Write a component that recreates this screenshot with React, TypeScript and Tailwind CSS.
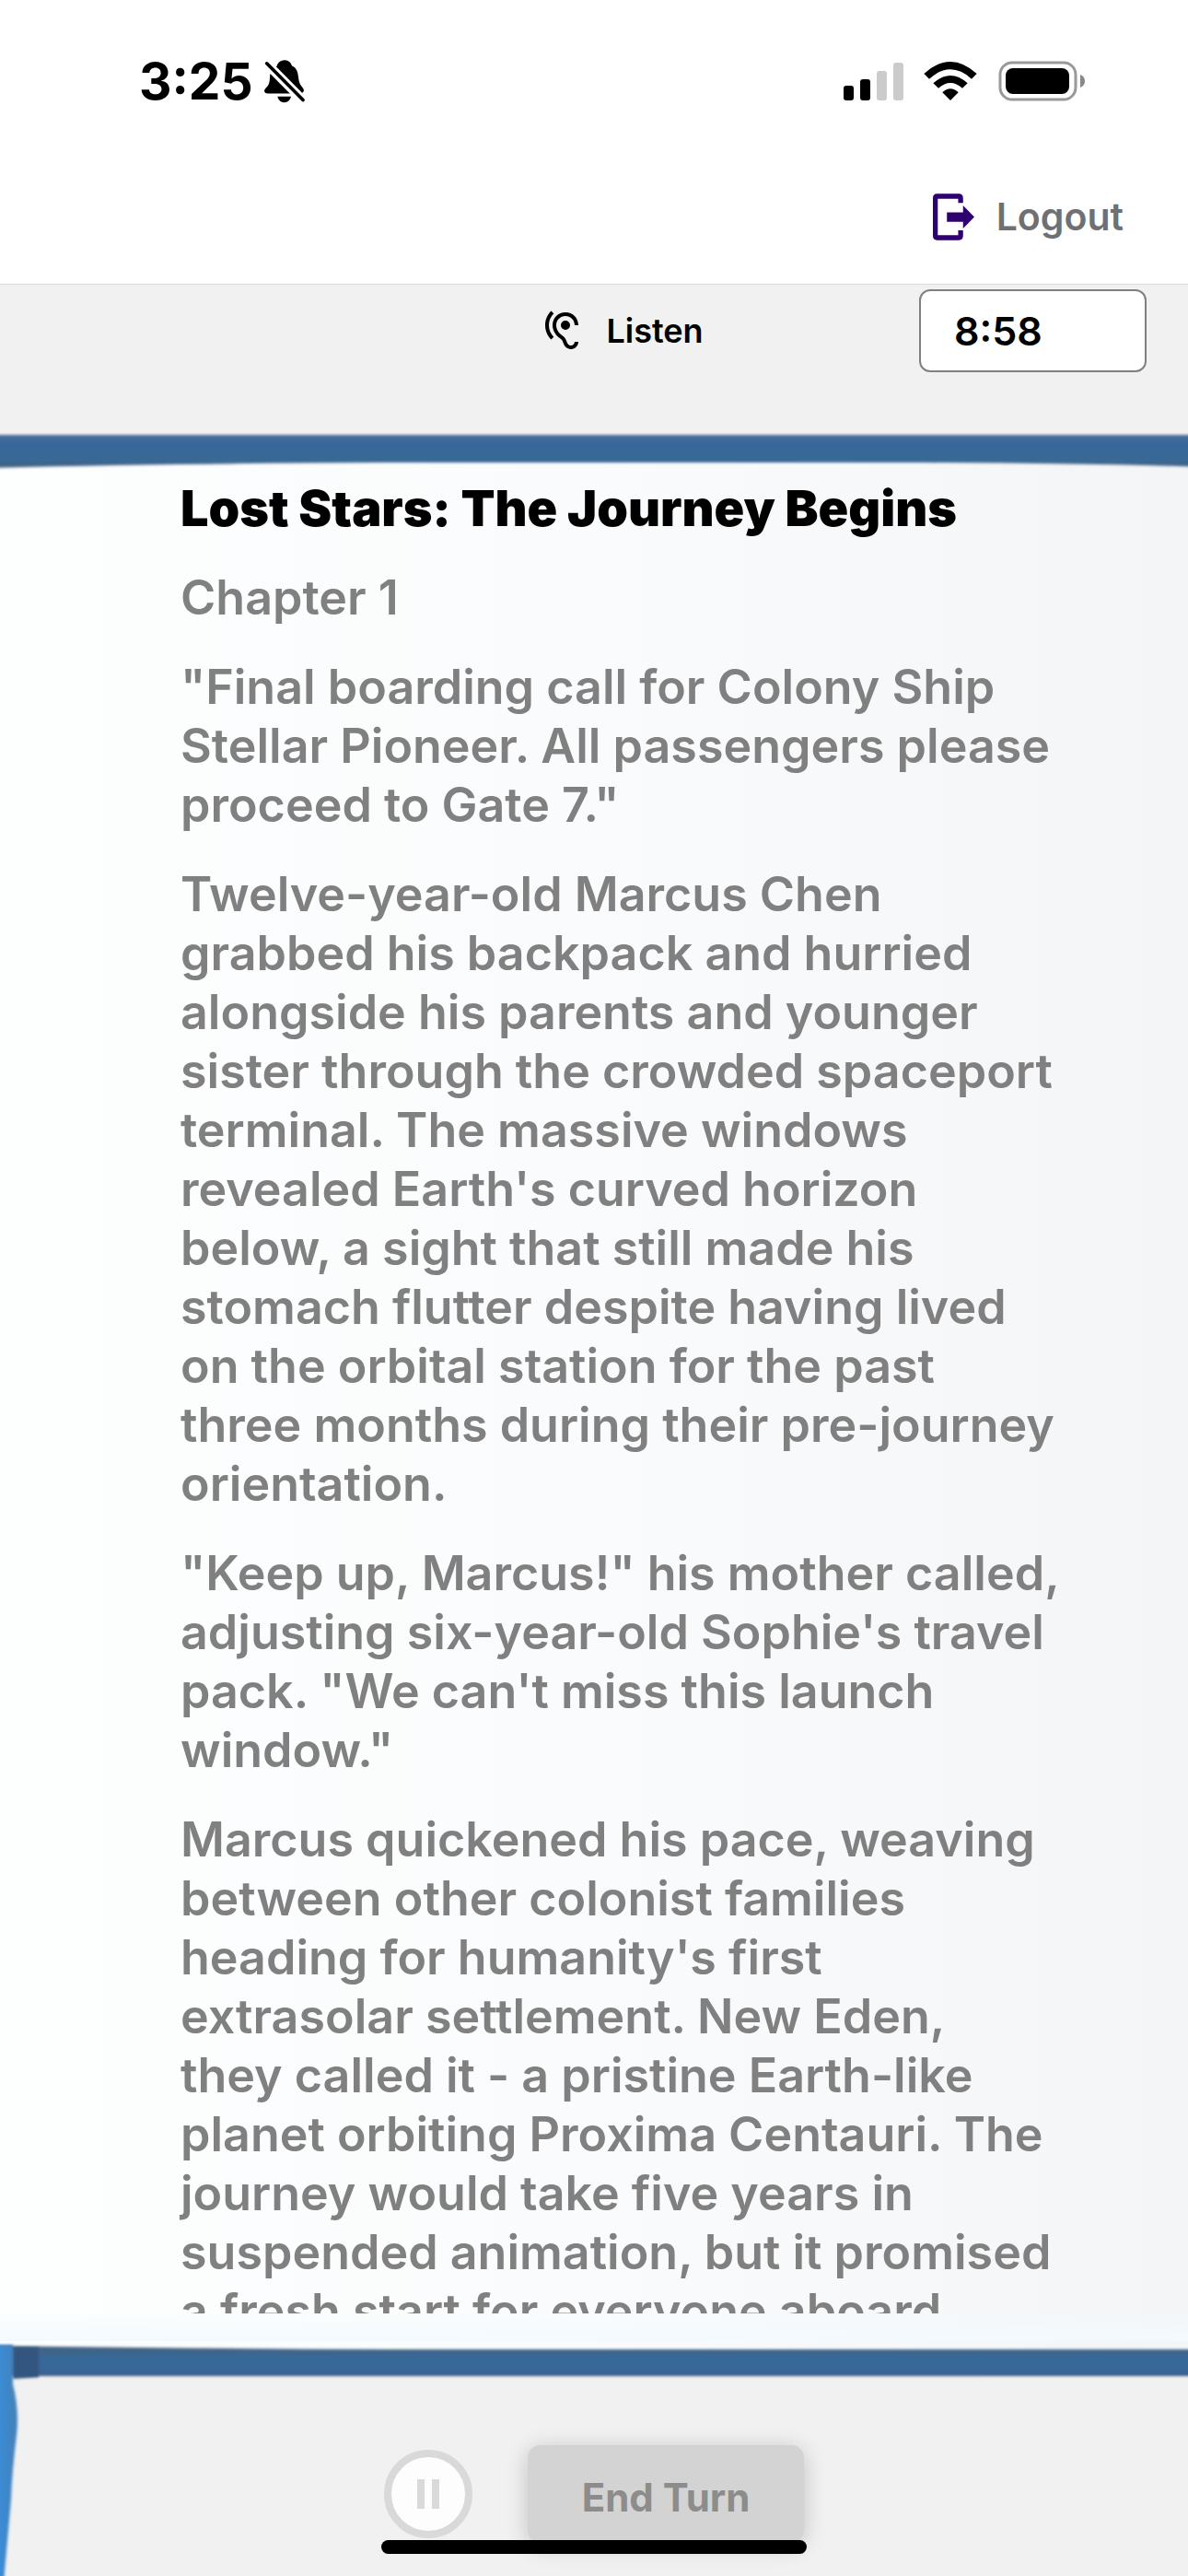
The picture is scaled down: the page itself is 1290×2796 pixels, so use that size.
import { MdHearing } from "react-icons/md";

const paragraphs = [
  "Chapter 1",
  '"Final boarding call for Colony Ship Stellar Pioneer. All passengers please proceed to Gate 7."',
  "Twelve-year-old Marcus Chen grabbed his backpack and hurried alongside his parents and younger sister through the crowded spaceport terminal. The massive windows revealed Earth's curved horizon below, a sight that still made his stomach flutter despite having lived on the orbital station for the past three months during their pre-journey orientation.",
  '"Keep up, Marcus!" his mother called, adjusting six-year-old Sophie\'s travel pack. "We can\'t miss this launch window."',
  "Marcus quickened his pace, weaving between other colonist families heading for humanity's first extrasolar settlement. New Eden, they\u00a0called it - a pristine Earth-like planet orbiting Proxima Centauri. The journey would take five years in suspended animation, but it promised a fresh start for everyone aboard.",
];

function StatusBar() {
  return (
    <div className="flex h-[164px] shrink-0 items-center justify-between pt-3 pr-[112px] pl-[151px]">
      <div className="flex items-center gap-3">
        <span className="text-[55px] leading-[64px] font-bold">3:25</span>
        <svg viewBox="0 0 132 140" className="h-[47px] w-[44px]" aria-hidden="true">
          <path
            d="M66 0C50 0 42 12 41 20C24 28 19 40 18 58C17 78 14 82 5 91C-4 101 0 109 12 109H114C128 109 133 99 125 90C115 79 113 72 111 56C109 36 104 25 90 19C87 9 80 0 66 0Z"
            fill="#000"
          />
          <path d="M43 119H87C84 131 76 138 65 138C54 138 46 131 43 119Z" fill="#000" />
          <path d="M6 10L127 132" stroke="#fff" strokeWidth="30" />
          <path d="M8 11L126 130" stroke="#000" strokeWidth="11" strokeLinecap="round" />
        </svg>
      </div>

      <div className="flex items-center">
        <svg viewBox="0 0 65 42" className="mr-[22px] h-[42px] w-[65px]" aria-hidden="true">
          <rect x="0" y="26" width="11" height="16" rx="3" />
          <rect x="18" y="19" width="11" height="23" rx="3" />
          <rect x="36" y="10" width="11" height="32" rx="3" fill="#cbcbcb" />
          <rect x="54" y="1" width="11" height="41" rx="3" fill="#cbcbcb" />
        </svg>
        <svg viewBox="0 0 172 126" className="mr-[23px] h-[42px] w-[58px]" aria-hidden="true">
          <path d="M86 126L60 100Q86 76 112 100Z" />
          <path d="M47 86L30 70Q86 20 142 70L125 86Q86 52 47 86Z" />
          <path d="M17 56L0 39Q86 -39 172 39L155 56Q86 -6 17 56Z" />
        </svg>
        <svg viewBox="0 0 94 44" className="h-[44px] w-[94px]" aria-hidden="true">
          <rect x="2" y="2" width="82" height="40" rx="13" fill="none" stroke="#999" strokeWidth="3" />
          <rect x="8" y="8" width="69" height="28" rx="8" />
          <path d="M89 15Q94 17 94 22T89 29Z" fill="#888" />
        </svg>
      </div>
    </div>
  );
}

function LogoutIcon() {
  return (
    <svg viewBox="0 0 136 152" className="h-[51px] w-[45px]" aria-hidden="true">
      <path
        d="M91 30V14Q91 8 85 8H14Q8 8 8 14V138Q8 144 14 144H85Q91 144 91 138V120"
        fill="none"
        stroke="#2f0070"
        strokeWidth="16"
      />
      <path d="M46 61H99V38L136 76L99 114V92H46Z" fill="#2f0070" />
    </svg>
  );
}

function BookTopEdge() {
  return (
    <svg
      viewBox="0 0 1290 44"
      preserveAspectRatio="none"
      className="block h-[44px] w-full shrink-0"
      aria-hidden="true"
    >
      <defs>
        <filter id="soft-top" x="-5%" y="-50%" width="110%" height="200%">
          <feGaussianBlur stdDeviation="1.5" />
        </filter>
        <linearGradient id="cover-top" x1="0" y1="0" x2="0" y2="1">
          <stop offset="0" stopColor="#4b719a" />
          <stop offset="0.25" stopColor="#37669a" />
          <stop offset="0.75" stopColor="#386795" />
          <stop offset="1" stopColor="#47617d" />
        </linearGradient>
      </defs>
      <path d="M0 0H1290V8H0Z" fill="#f1f1f1" />
      <path
        d="M-20 5H1310V40Q1200 36 1000 35H420Q180 36 -20 41Z"
        fill="url(#cover-top)"
        filter="url(#soft-top)"
      />
    </svg>
  );
}

function BookBottomEdge() {
  return (
    <svg
      viewBox="0 0 1290 44"
      preserveAspectRatio="none"
      className="block h-[44px] w-full shrink-0"
      aria-hidden="true"
    >
      <defs>
        <filter id="soft-bottom" x="-5%" y="-50%" width="110%" height="200%">
          <feGaussianBlur stdDeviation="1.5" />
        </filter>
        <linearGradient id="cover-bottom" x1="0" y1="0" x2="0" y2="1">
          <stop offset="0" stopColor="#47617d" />
          <stop offset="0.35" stopColor="#386795" />
          <stop offset="0.85" stopColor="#37669a" />
          <stop offset="1" stopColor="#3d5c80" />
        </linearGradient>
      </defs>
      <path d="M0 36H1290V44H0Z" fill="#f1f1f1" />
      <path
        d="M-20 5Q200 8 430 9H1310V38H-20Z"
        fill="url(#cover-bottom)"
        filter="url(#soft-bottom)"
      />
      <path d="M14 7H42V39L14 41Z" fill="#30567f" filter="url(#soft-bottom)" />
    </svg>
  );
}

function Ribbon() {
  return (
    <svg
      viewBox="0 0 30 253"
      className="absolute bottom-0 left-0 h-[253px] w-[30px]"
      aria-hidden="true"
    >
      <defs>
        <filter id="soft-ribbon" x="-50%" y="-5%" width="200%" height="110%">
          <feGaussianBlur stdDeviation="1.5" />
        </filter>
        <linearGradient id="ribbon" x1="0" y1="0" x2="1" y2="0">
          <stop offset="0.3" stopColor="#3a8cd8" />
          <stop offset="1" stopColor="#4480b5" />
        </linearGradient>
      </defs>
      <path
        d="M-10 2H14V45Q21 72 18 100Q13 140 12 170L4 260H-10Z"
        fill="url(#ribbon)"
        filter="url(#soft-ribbon)"
      />
    </svg>
  );
}

export default function App() {
  return (
    <div className="relative flex h-screen flex-col overflow-hidden bg-[#f1f1f1] font-['Inter',sans-serif] text-black">
      <header className="shrink-0 border-b border-[#d9d9d9] bg-white">
        <StatusBar />
        <div className="flex h-[144px] items-center justify-end pr-[70px] pb-[2px]">
          <a href="#logout" className="flex items-center gap-6">
            <LogoutIcon />
            <span className="text-[41px] leading-[52px] font-semibold text-[#6e7072]">Logout</span>
          </a>
        </div>
      </header>

      <div className="grid h-[158px] shrink-0 grid-cols-[1fr_auto_1fr] items-start pt-[5px] pr-[45px] pl-[45px]">
        <button type="button" className="col-start-2 flex h-[90px] items-center gap-6 pl-[60px]">
          <MdHearing className="h-12 w-12" />
          <span className="text-[36px] leading-[44px] font-semibold">Listen</span>
        </button>
        <input
          type="text"
          readOnly
          aria-label="Time left"
          value="8:58"
          className="h-[90px] w-[247px] justify-self-end rounded-xl border-2 border-[#808080] bg-white pl-9 text-[43px] font-semibold"
        />
      </div>

      <main className="flex min-h-0 flex-1 flex-col bg-linear-to-r from-[#fdfefe] via-[#fafbfc] to-[#f4f5f7]">
        <BookTopEdge />
        <article className="min-h-0 flex-1 overflow-hidden pt-[9px] pr-[137px] pl-[196px] text-[52px] leading-[64px]">
          <h1 className="text-[54px] font-black">Lost Stars: The Journey Begins</h1>
          {paragraphs.map((text) => (
            <p key={text} className="mt-[33px] font-semibold text-[#808080]">
              {text}
            </p>
          ))}
        </article>
        <div className="h-[30px] shrink-0 bg-linear-to-b from-transparent to-[#f3faff]" />
        <BookBottomEdge />
      </main>

      <footer className="flex h-[211px] shrink-0 items-center justify-center gap-[60px] pt-8">
        <button
          type="button"
          disabled
          aria-label="Pause"
          className="flex h-24 w-24 items-center justify-center gap-2 rounded-full border-8 border-[#d9d9d9] bg-[#fdfdfd]"
        >
          <span className="h-8 w-2 bg-[#d9d9d9]" />
          <span className="h-8 w-2 bg-[#d9d9d9]" />
        </button>
        <button
          type="button"
          disabled
          className="h-[106px] w-[300px] rounded-[14px] bg-[#d3d3d3] pt-2 text-[42px] font-bold text-[#8c8c8c] shadow-[0_4px_24px_rgba(0,0,0,0.2)]"
        >
          End Turn
        </button>
      </footer>

      <Ribbon />
      <div className="absolute bottom-6 left-1/2 h-[15px] w-[462px] -translate-x-1/2 rounded-full bg-black" />
    </div>
  );
}
